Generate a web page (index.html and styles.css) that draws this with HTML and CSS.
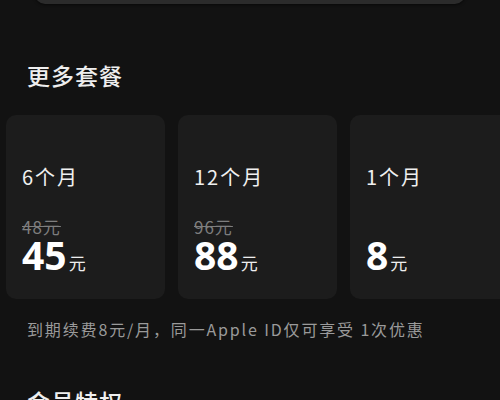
FILE: index.html
```html
<!DOCTYPE html>
<html lang="zh">
<head>
<meta charset="utf-8">
<link rel="stylesheet" href="styles.css">
</head>
<body>
<div class="page">
  <div class="topcard"></div>
  <h2 class="title first">更多套餐</h2>
  <div class="plans">
    <div class="plan">
      <div class="name">6个月</div>
      <div class="old">48元</div>
      <div class="price"><span class="num">45</span><span class="unit">元</span></div>
    </div>
    <div class="plan">
      <div class="name">12个月</div>
      <div class="old">96元</div>
      <div class="price"><span class="num">88</span><span class="unit">元</span></div>
    </div>
    <div class="plan">
      <div class="name">1个月</div>
      <div class="old empty"></div>
      <div class="price"><span class="num">8</span><span class="unit">元</span></div>
    </div>
  </div>
  <p class="note">到期续费8元/月，同一Apple ID仅可享受 1次优惠</p>
  <h2 class="title second">会员特权</h2>
</div>
</body>
</html>
```

FILE: styles.css
```css
html, body {
  margin: 0;
  padding: 0;
  background: #121212;
  width: 500px;
  height: 400px;
  overflow: hidden;
  font-family: "Noto Sans CJK SC", "Noto Sans", sans-serif;
  color: #f2f2f2;
}
.page {
  display: flex;
  flex-direction: column;
}
.topcard {
  margin: -20px 35px 0 35px;
  height: 24px;
  background: #2b2b2b;
  border-radius: 0 0 10px 10px;
  box-shadow: 0 1px 3px rgba(0,0,0,0.6);
}
.title {
  margin: 0;
  font-size: 23px;
  font-weight: 500;
  line-height: 30px;
  letter-spacing: 1px;
  padding-left: 27px;
  color: #eeeeee;
}
.title.first {
  margin-top: 56px;
}
.plans {
  display: flex;
  gap: 13px;
  margin-top: 25px;
  padding-left: 6px;
}
.plan {
  flex: 0 0 159px;
  height: 184px;
  background: #1c1c1c;
  border-radius: 10px;
  box-sizing: border-box;
  padding: 50px 16px 0 16px;
  display: flex;
  flex-direction: column;
}
.name {
  font-size: 20px;
  line-height: 24px;
  letter-spacing: 2px;
  color: #f0f0f0;
}
.old {
  margin-top: 28px;
  height: 20px;
  font-size: 17px;
  line-height: 20px;
  letter-spacing: 1px;
  color: #7e7e7e;
  text-decoration: line-through;
}
.price {
  display: flex;
  align-items: baseline;
  line-height: 32px;
  margin-top: 2px;
  height: 32px;
}
.num {
  font-size: 39px;
  line-height: 32px;
  font-weight: 700;
  color: #ffffff;
  font-family: "Noto Sans", "Noto Sans CJK SC", sans-serif;
}
.unit {
  font-size: 17px;
  line-height: 20px;
  margin-left: 2px;
  color: #eeeeee;
}
.note {
  margin: 20px 0 0 0;
  padding-left: 27px;
  font-size: 16px;
  line-height: 20px;
  letter-spacing: 1.85px;
  color: #9a9a9a;
  white-space: nowrap;
}
.title.second {
  margin-top: 47px;
}
```
